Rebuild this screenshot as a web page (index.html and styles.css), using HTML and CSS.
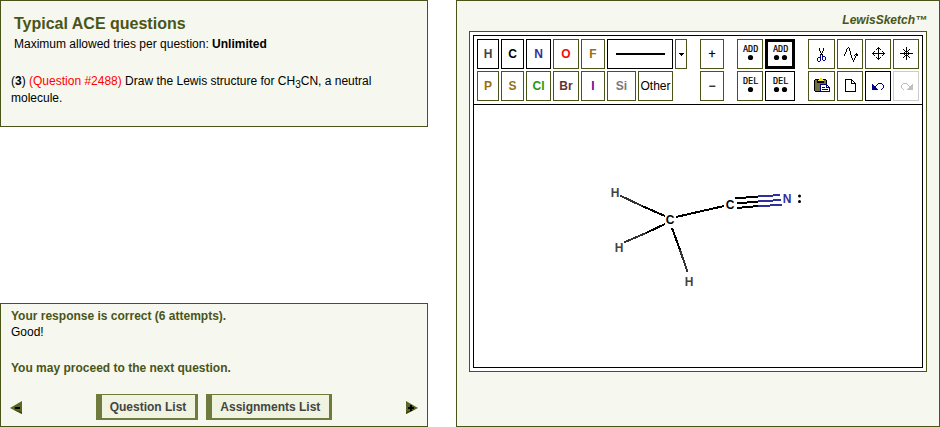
FILE: index.html
```html
<!DOCTYPE html>
<html lang="en">
<head>
<meta charset="utf-8">
<title>ACE questions</title>
<link rel="stylesheet" href="styles.css">
</head>
<body>
<main class="page">
  <div class="left">
    <section class="panel question">
      <h1>Typical ACE questions</h1>
      <p class="tries">Maximum allowed tries per question: <b>Unlimited</b></p>
      <p class="statement">(<b>3</b>) <span class="qnum">(Question #2488)</span> Draw the Lewis structure for CH<sub>3</sub>CN, a neutral<br>molecule.</p>
    </section>
    <section class="panel feedback">
      <p class="strong">Your response is correct (6 attempts).</p>
      <p>Good!</p>
      <p class="strong next">You may proceed to the next question.</p>
      <nav class="nav">
        <svg class="arrow" width="13" height="14" viewBox="0 0 13 14"><path d="M0 7 12 0V13Z" fill="#5b6524"/><path d="M3 8.5 12 11V13Z" fill="#3d4700"/><path d="M5 6h5v2H5z"/></svg>
        <div class="links"><a>Question List</a><a>Assignments List</a></div>
        <svg class="arrow" width="13" height="14" viewBox="0 0 13 14"><path d="M0 0 12 7 0 13Z" fill="#5b6524"/><path d="M0 11 10 8 0 13Z" fill="#3d4700"/><path d="M2 6h6v2H2zM4 4h2v6H4z"/></svg>
      </nav>
    </section>
  </div>
  <section class="panel sketch">
    <div class="brand">LewisSketch™</div>
    <div class="frame"><div class="editor">
      <div class="toolbar">
        <div class="elements">
          <button class="k h">H</button><button class="k c">C</button><button class="k n">N</button><button class="o">O</button><button class="f">F</button>
          <button class="k bond"><i></i></button><button><svg width="10" height="28" viewBox="676 40 10 28"><path d="M679 53h5v1h-1v1h-1v1h-1v-1h-1v-1h-1z"/></svg></button>
          <button class="f">P</button><button class="f">S</button><button class="cl">Cl</button><button class="br">Br</button><button class="i">I</button>
          <div class="pair"><button class="si">Si</button><button class="other">Other</button></div>
        </div>
        <div class="charge"><button>+</button><button>−</button></div>
        <div class="electrons">
          <button><svg width="24" height="28" viewBox="738 40 24 28"><text x="743" y="52">ADD</text><circle cx="750.5" cy="57.5" r="2.6"/></svg></button>
          <button class="active"><svg width="24" height="24" viewBox="768 42 24 24"><text x="773" y="52">ADD</text><circle cx="776.5" cy="57.5" r="2.6"/><circle cx="784.5" cy="57.5" r="2.6"/></svg></button>
          <button><svg width="24" height="28" viewBox="738 72 24 28"><text x="743" y="84">DEL</text><circle cx="750.5" cy="89.5" r="2.6"/></svg></button>
          <button class="k"><svg width="28" height="28" viewBox="766 72 28 28"><text x="773" y="84">DEL</text><circle cx="776.5" cy="89.5" r="2.6"/><circle cx="784.5" cy="89.5" r="2.6"/></svg></button>
        </div>
        <div class="tools">
          <button><svg width="25" height="28" viewBox="809 40 25 28" class="px"><path d="M819 48h1v3h-1zM823 48h1v3h-1zM820 51h1v2h-1zM822 51h1v2h-1zM821 53h1v2h-1zM820 54h3v1h-3z"/><path d="M820 55h1v6h-1zM822 55h1v5h-1zM818 57h2v1h-2zM817 58h1v3h-1zM818 61h2v1h-2zM823 56h2v1h-2zM825 57h1v3h-1zM823 60h2v1h-2z" fill="#000090"/><path d="M818.500 46.500h10v15h-10" fill="none" stroke="#fffbd8" stroke-dasharray="1 2"/></svg></button>
          <button><svg width="24" height="28" viewBox="838 40 24 28" class="px"><path d="M844 54h1v2h-1zM845 52h1v2h-1zM846 49h1v3h-1zM847 48h1v1h-1zM848 47h1v1h-1zM849 48h1v3h-1zM850 51h1v4h-1zM851 55h1v3h-1zM852 58h1v2h-1zM853 60h1v2h-1zM854 58h1v2h-1zM855 56h1v2h-1zM856 53h1v3h-1zM854 55h1v1h-1zM855 54h3v1h-3zM857 55h1v1h-1z"/></svg></button>
          <button><svg width="24" height="28" viewBox="866 40 24 28" class="px"><path d="M872 53h13v1h-13zM878 47h1v13h-1zM877 48h3v1h-3zM876 49h1v1h-1zM880 49h1v1h-1zM877 58h3v1h-3zM876 57h1v1h-1zM880 57h1v1h-1zM873 52h1v3h-1zM874 51h1v1h-1zM874 55h1v1h-1zM883 52h1v3h-1zM882 51h1v1h-1zM882 55h1v1h-1z"/></svg></button>
          <button><svg width="24" height="28" viewBox="894 40 24 28" class="px"><path d="M900 53h13v1h-13zM906 47h1v13h-1zM905 51h3v1h-3zM904 50h1v1h-1zM908 50h1v1h-1zM903 49h1v1h-1zM909 49h1v1h-1zM905 55h3v1h-3zM904 56h1v1h-1zM908 56h1v1h-1zM903 57h1v1h-1zM909 57h1v1h-1zM904 52h1v3h-1zM908 52h1v3h-1z"/></svg></button>
          <button><svg width="25" height="28" viewBox="809 72 25 28" class="px"><path d="M815 79h11v1h1v11h-1v1h-11v-1h-1V80h1z"/><path d="M815 80h11v11h-11z" fill="#6e7042"/><path d="M817 80h7v3h-7z"/><path d="M817 81h1v-1h1v-1h1v-1h2v1h1v1h1v1z" fill="#ffe31a"/><path d="M820.500 84.500h6l3 3v4h-9z" fill="#fff" stroke="#000080"/><path d="M822 87h3v1h-3zM822 89h6v1h-6zM826 85h1v3h-1zM826 87h3v1h-3z" fill="#000080"/></svg></button>
          <button><svg width="24" height="28" viewBox="838 72 24 28" class="px"><path class="line" d="M845.500 79.500h6l4 4v8h-10zM851.500 79.500v4h4"/></svg></button>
          <button class="k"><svg width="24" height="28" viewBox="866 72 24 28" class="px"><path d="M872 84h1v1h1v1h1v1h1v1h1v1h1v1h-6zM875 86h1v-1h1v-1h1v-1h4v1h1v1h1v3h-1v1h-1v1h-1v-1h1v-1h1v-3h-1v-1h-4v1h-1v1h-1v1h-1z" fill="#000080"/></svg></button>
          <button class="disabled"><svg width="24" height="28" viewBox="894 72 24 28" class="px"><path transform="translate(1785) scale(-1 1)" d="M872 84h1v1h1v1h1v1h1v1h1v1h1v1h-6zM875 86h1v-1h1v-1h1v-1h4v1h1v1h1v3h-1v1h-1v1h-1v-1h1v-1h1v-3h-1v-1h-4v1h-1v1h-1v1h-1z" fill="#c0c0c0"/></svg></button>
        </div>
      </div>
      <svg class="canvas" width="448" height="262" viewBox="474 105 448 262">
        <g class="bonds">
          <path d="M642 206 665 216M646 233 665 224M672 228 680 250M676 217 724 206M735 198.500 758 196.500M737 203.500 758 201.500M737 208 758 206"/>
          <path class="hb" d="M620 195.500 642 206M624 242.500 646 233M680 250 687.500 272"/>
          <path class="nb" d="M758 196.500 780 195M758 201.500 781 200M758 206 782 205"/>
        </g>
        <g class="atoms"><text x="615.200" y="197" class="h">H</text><text x="619.200" y="252" class="h">H</text><text x="689.200" y="286" class="h">H</text><text x="670.200" y="224">C</text><text x="730.200" y="209">C</text><text x="787.200" y="203" class="n">N</text></g>
        <circle cx="799.500" cy="196" r="1.500"/><circle cx="799.500" cy="201.500" r="1.500"/>
      </svg>
    </div></div>
  </section>
</main>
</body>
</html>
```

FILE: styles.css
```css
* { box-sizing: border-box; }
body { margin: 0; background: #fff; color: #000; font: 12px/16px "Liberation Sans", Arial, sans-serif; }
p, h1 { margin: 0; }
svg { display: block; }
.page { display: grid; grid-template-columns: 428px 484px; gap: 28px; height: 427px; }
.left { display: flex; flex-direction: column; justify-content: space-between; }
.panel { background: #f6f7ee; border: 1px solid #495518; }
.question { height: 127px; padding: 13px 10px 0; }
h1 { margin-left: 3px; font-size: 16px; line-height: 20px; color: #495518; }
.tries { margin: 2px 0 0 3px; }
.statement { margin-top: 21px; line-height: 17px; }
.statement sub { font-size: 10px; line-height: 0; vertical-align: -3px; }
.qnum { color: #f00; }
.feedback { height: 124px; padding: 4px 10px 0; display: flex; flex-direction: column; }
.strong { font-weight: bold; color: #495518; }
.next { margin-top: 20px; }
.nav { display: flex; justify-content: space-between; align-items: center; margin: 18px -2px 0 -1px; height: 26px; }
.arrow { margin-top: 2px; }
.links { display: flex; gap: 8px; margin-right: 1px; }
.links a { height: 26px; padding: 0 9px 0 8px; border: solid #6e7b3c; border-width: 1px 3px 2px 6px; background: #eff3df; color: #444; font-weight: bold; line-height: 25px; white-space: nowrap; }
.sketch { height: 427px; padding: 12px 12px 0; }
.brand { height: 18px; line-height: 14px; text-align: right; font-weight: bold; font-style: italic; color: #495518; }
.frame { width: 458px; height: 341px; border: 1px solid #495518; background: #fff; padding: 3px; }
.editor { width: 450px; height: 333px; border: 1px solid #000; }
.toolbar { display: flex; height: 69px; padding: 3px; border-bottom: 1px solid #000; }
.toolbar > div { display: grid; grid-template-rows: 30px 30px; gap: 2px; }
.elements { grid-template-columns: 22px 23px 25px 26px 24px 66px 12px; }
.toolbar > .charge { grid-template-columns: 24px; margin-left: 13px; }
.toolbar > .electrons { grid-template-columns: 26px 30px; margin-left: 13px; }
.toolbar > .tools { grid-template-columns: 27px 26px 26px 26px; margin-left: 13px; }
.pair { display: grid; grid-template-columns: 29px 35px; gap: 2px; }
button { display: flex; align-items: center; justify-content: center; min-width: 0; margin: 0; padding: 0; border: 1px solid #495518; background: #fff; color: #000; font: bold 12px/14px "Liberation Sans", Arial, sans-serif; }
.charge button { font-weight: normal; -webkit-text-stroke: 0.3px #000; }
.k { border-color: #000; }
.active { border: 3px solid #000; }
.disabled { border-color: #ccc; }
.h { color: #444; fill: #444; }
.n { color: #30309c; fill: #30309c; }
.o { color: #f00d0d; }
.f { color: #996f12; }
.cl { color: #1f9a0c; }
.br { color: #663334; }
.i { color: #6b0d9b; }
.si { color: #777; }
.other { font-weight: normal; }
.bond i { width: 49px; height: 2px; background: #000; }
.electrons text { font: 8.5px "DejaVu Sans Mono", monospace; stroke: #000; stroke-width: 0.2px; }
.px { shape-rendering: crispEdges; }
.line { fill: none; stroke: #000; }
.bonds { fill: none; stroke: #000; stroke-width: 2; shape-rendering: crispEdges; }
.hb { stroke: #333; }
.nb { stroke: #30309c; }
.atoms { font: bold 12px "Liberation Sans", Arial, sans-serif; text-anchor: middle; }
```
